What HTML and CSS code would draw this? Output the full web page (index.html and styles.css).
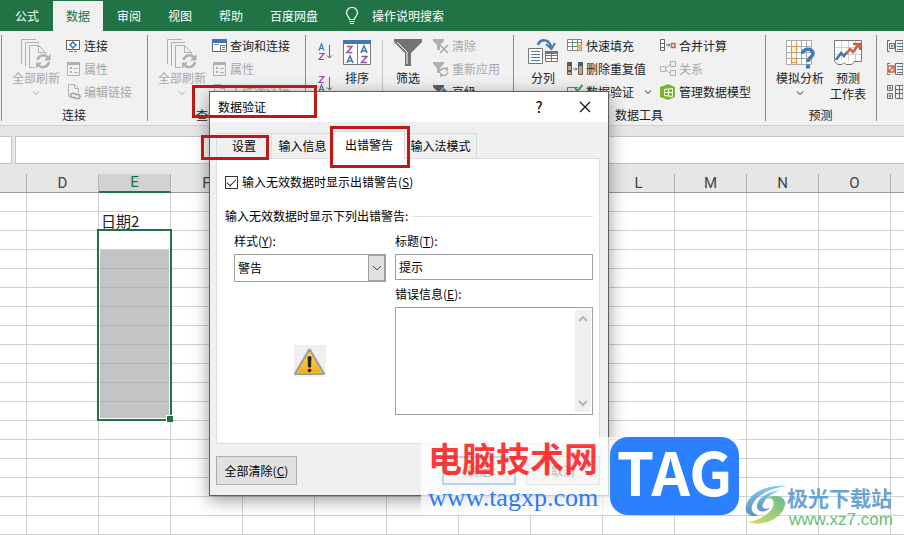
FILE: index.html
```html
<!DOCTYPE html>
<html lang="zh-CN">
<head>
    <meta charset="UTF-8">
    <meta name="viewport" content="width=device-width, initial-scale=1.0">
    <title>数据验证</title>
    <link rel="stylesheet" href="styles.css">
</head>
<body>
    <!-- shared icons -->
    <svg class="defs" aria-hidden="true">
        <symbol id="i-refresh" viewBox="0 0 32 32">
            <g fill="none" stroke="#b0b0b0">
                <path d="M1.500 26V1.500H16M5.500 28V4.500H19"/>
                <path d="M15 29.500H9.500V7.500H18.500L25.500 14.500V16M18.500 7.500V14.500H25.500"/>
                <path d="M17.500 22A6 6 0 0 1 28 19.500M29 24A6 6 0 0 1 18.500 27" stroke-width="2.500"/>
            </g>
            <path d="M30.500 16V22.500H24zM16 30.500V24.500H22z" fill="#b0b0b0"/>
        </symbol>
        <symbol id="i-props" viewBox="0 0 16 16">
            <path d="M2.500 1.500H14.500V14.500H2.500z" fill="none" stroke="#b0b0b0"/>
            <path d="M2 1H15V4H2zM5 6h2v2H5zM5 10h2v2H5zM9 7h4v1H9zM9 11h4v1H9z" fill="#b0b0b0"/>
        </symbol>
        <symbol id="i-link" viewBox="0 0 16 16">
            <path d="M5 12.500H3.500V.5H9.500L13.500 4.500V9M9.500 .5V4.500H13.500" fill="none" stroke="#b0b0b0"/>
            <path d="M9 13.500H7.500A2 2 0 0 1 7.500 9.500H9.500A2 2 0 0 1 11.500 11.500M10.500 10.500H13A2 2 0 0 1 13 14.500H11A2 2 0 0 1 9 12.500" fill="none" stroke="#a2a2a2" stroke-width="1.500"/>
        </symbol>
        <symbol id="i-chevron" viewBox="0 0 8 6">
            <path d="M1 1.500L4 4.500L7 1.500" fill="none" stroke="currentColor"/>
        </symbol>
        <symbol id="i-outline" viewBox="0 0 16 16">
            <path d="M3 2.500H.5V13.500H3M4 5.500H7.500V10.500H2.500V5.500H4M8.500 2.500H16V13.500H8.500z" fill="none" stroke="#6b6b6b"/>
            <path d="M3.500 8H6.500M5 6.500V9.500M10 5.500H16M10 8.500H16M10 11.500H16" stroke="#4a7fb5"/>
        </symbol>
    </svg>

    <nav class="tabbar">
        <a href="#">公式</a>
        <a href="#" class="current">数据</a>
        <a href="#">审阅</a>
        <a href="#">视图</a>
        <a href="#">帮助</a>
        <a href="#">百度网盘</a>
        <a href="#" class="tellme">
            <svg width="14" height="18" viewBox="0 0 14 18"><path d="M4.500 12.500C4.500 9.500 1.500 9 1.500 5.800A5.500 5.300 0 0 1 12.500 5.800C12.500 9 9.500 9.500 9.500 12.500zM4.500 14.500H9.500M5 16.500H9" fill="none" stroke="#fff" stroke-width="1.200"/></svg>
            操作说明搜索
        </a>
    </nav>

    <div class="ribbon">
        <section class="group connections">
            <div class="tools">
                <button class="big off"><svg width="32" height="32"><use href="#i-refresh"/></svg>全部刷新<svg class="chevron"><use href="#i-chevron"/></svg></button>
                <div class="stack">
                    <button class="small"><svg viewBox="0 0 16 16"><path d="M1.500 2.500H14.500V11.500H1.500z" fill="#fff" stroke="#606060"/><path d="M8 4L11 7L8 10L5 7z" fill="none" stroke="#2f78b0" stroke-width="1.500"/><path d="M4 13.500H8M9 13.500H12" stroke="#4e9a68"/></svg>连接</button>
                    <button class="small off"><svg><use href="#i-props"/></svg>属性</button>
                    <button class="small off"><svg><use href="#i-link"/></svg>编辑链接</button>
                </div>
            </div>
            <h2>连接</h2>
        </section>

        <section class="group queries">
            <div class="tools">
                <button class="big off"><svg width="32" height="32"><use href="#i-refresh"/></svg>全部刷新<svg class="chevron"><use href="#i-chevron"/></svg></button>
                <div class="stack">
                    <button class="small"><svg viewBox="0 0 16 16"><path d="M1.500 1.500H15.500V13.500H1.500z" fill="#fff" stroke="#606060"/><path d="M1 1H16V5H1z" fill="#3f79b0"/><path d="M9.500 7.500H15.500M9.500 7V13.500M11 9.500H14M11 11.500H14" stroke="#777"/><path d="M3 6.500H8" stroke="#5b9bd5"/></svg>查询和连接</button>
                    <button class="small off"><svg><use href="#i-props"/></svg>属性</button>
                    <button class="small off"><svg><use href="#i-link"/></svg>工作簿链接</button>
                </div>
            </div>
            <h2>查询和连接</h2>
        </section>

        <section class="group sorting">
            <div class="tools">
                <div class="sorters">
                    <button aria-label="升序"><svg width="16" height="18" viewBox="0 0 16 18" fill="none"><path d="M2 7.500L4.500 1L7 7.500M3 5.500H6" stroke="#3f79b0" stroke-width="1.200"/><path d="M2 10.500H7L2 16.500H7" stroke="#8e55a8" stroke-width="1.200"/><path d="M12.500 2V15M10 12.500L12.500 15L15 12.500" stroke="#666"/></svg></button>
                    <button aria-label="降序"><svg width="16" height="18" viewBox="0 0 16 18" fill="none"><path d="M2 1.500H7L2 7.500H7" stroke="#8e55a8" stroke-width="1.200"/><path d="M2 16.500L4.500 10L7 16.500M3 14.500H6" stroke="#3f79b0" stroke-width="1.200"/><path d="M12.500 2V15M10 12.500L12.500 15L15 12.500" stroke="#666"/></svg></button>
                </div>
                <button class="big"><svg width="30" height="32" viewBox="0 0 30 32" fill="none"><path d="M1.500 3.500H28.500V26.500H1.500zM15.500 3V26" fill="#fff" stroke="#777"/><path d="M1 2H29V6H1z" fill="#3f79b0"/><path d="M5 8.500H10L5 14.500H10.500M19.500 18.500H25L19.500 24.500H25" stroke="#8e55a8" stroke-width="1.500"/><path d="M5 25L8 18L11 25M6 23H10M19 15L22 8L25 15M20 13H24" stroke="#3f79b0" stroke-width="1.500"/></svg>排序</button>
                <span class="divider"></span>
                <button class="big"><svg width="30" height="32" viewBox="0 0 30 32"><path d="M1 1H29V4L18 15V28H12V15L1 4z" fill="#737373"/><path d="M4 4L14 14V26" fill="none" stroke="#fff"/></svg>筛选</button>
                <div class="stack">
                    <button class="small off"><svg viewBox="0 0 16 16"><path d="M0 1H11V3L7 7V12H4V7L0 3z" fill="#b0b0b0"/><path d="M7 7L15 15M15 7L7 15" stroke="#a6a6a6" stroke-width="1.500"/></svg>清除</button>
                    <button class="small off"><svg viewBox="0 0 16 16"><path d="M0 1H11V3L7 7V12H4V7L0 3z" fill="#b0b0b0"/><path d="M7 10A4 4 0 0 1 14 9V6M15 11A4 4 0 0 1 8 13V16" fill="none" stroke="#a6a6a6" stroke-width="1.500"/></svg>重新应用</button>
                    <button class="small"><svg viewBox="0 0 16 16"><path d="M0 1H11V3L7 7V12H4V7L0 3z" fill="#606060"/><path d="M11 4L15 8L11 12L7 8z" fill="#3f79b0"/></svg>高级</button>
                </div>
            </div>
        </section>

        <section class="group datatools">
            <div class="tools">
                <button class="big"><svg width="32" height="32" viewBox="0 0 32 32" fill="none"><path d="M1.500 10.500H15.500V25.500H1.500z" fill="#fff" stroke="#777"/><path d="M4 13.500H13M4 16.500H13M4 19.500H13M4 22.500H13" stroke="#3f79b0"/><path d="M18.500 13.500H30.500V23.500H18.500zM24.500 13V23M18 17.500H30M18 20.500H30" fill="#fff" stroke="#777"/><path d="M18 13H31V16H18z" fill="#777"/><path d="M11 7C13 1 22 0 24 9" stroke="#3f79b0" stroke-width="2.500"/><path d="M19 6L24.500 11L28 5" stroke="#3f79b0" stroke-width="2"/></svg>分列</button>
                <div class="stack">
                    <button class="small"><svg viewBox="0 0 16 16"><path d="M.5 1.500H14.500V12.500H.5zM5.500 1V12M10.500 1V12M0 4.500H15M0 8.500H15" fill="#fff" stroke="#858585"/><path d="M5.500 4.500H10.500V8.500H5.500z" fill="none" stroke="#4e9a68"/><path d="M12 6H16L14 9H16L10 15L12 10H10z" fill="#f2b25c"/></svg>快速填充</button>
                    <button class="small"><svg viewBox="0 0 16 16"><path d="M.5 1.500H4.500V13.500H.5zM11.500 1.500H15.500V13.500H11.500z" fill="#d8a070" stroke="#606060"/><path d="M0 1H5V5H0zM11 1H16V5H11zM0 9H5V11H0z" fill="#3f617f"/><path d="M6 8H10M8.500 6.500L10 8L8.500 9.500" fill="none" stroke="#3f79b0"/></svg>删除重复值</button>
                    <button class="small"><svg viewBox="0 0 16 16"><path d="M11 3.500H.5V8.500H9M.5 10.500H10V14.500H.5z" fill="none" stroke="#777"/><path d="M8 4L10.500 7L15.500 1" fill="none" stroke="#4e9a78" stroke-width="2"/></svg>数据验证<svg class="chevron"><use href="#i-chevron"/></svg></button>
                </div>
                <div class="stack">
                    <button class="small"><svg viewBox="0 0 16 16"><path d="M.5 1.500H4.500V12.500H.5zM0 5.500H5M0 9.500H5" fill="#fff" stroke="#666"/><path d="M6 7H10M8.500 5.500L10 7L8.500 8.500" fill="none" stroke="#666"/><path d="M11.500 5.500H15V9.500H11.500z" fill="none" stroke="#d2603c" stroke-width="1.500"/></svg>合并计算</button>
                    <button class="small off"><svg viewBox="0 0 16 16"><path d="M.5 5.500H5.500V10.500H.5zM10.500 .5H15.500V5.500H10.500zM10.500 9.500H15.500V14.500H10.500zM5.500 7L10 3.500M5.500 9L10 12" fill="none" stroke="#b0b0b0"/></svg>关系</button>
                    <button class="small"><svg viewBox="0 0 16 16"><path d="M0 3L8 0L15 3V13L8 16L0 13z" fill="#78b82a"/><path d="M4.500 5.500L12.500 4.500V12.500L4.500 11.500zM8.500 5V12M4.500 8.500H12.500" fill="none" stroke="#fff"/></svg>管理数据模型</button>
                </div>
            </div>
            <h2>数据工具</h2>
        </section>

        <section class="group forecast">
            <div class="tools">
                <button class="big"><svg width="32" height="32" viewBox="0 0 32 32" fill="none"><path d="M2.500 2.500H27.500V26.500H2.500zM7.500 2V26M12.500 2V26M17.500 2V26M22.500 2V26M2 8.500H27M2 14.500H27M2 20.500H27" fill="#fff" stroke="#aaa"/><path d="M7.500 8.500H12.500V14.500H7.500zM7.500 20.500H12.500V24.500H7.500zM12.500 4.500V8.500" stroke="#dfa24f" stroke-width="1.500"/><path d="M18.500 16C18 10 29 9.500 29 15.500C29 20 24 19 24 24" stroke="#3d7bbd" stroke-width="3.500"/><path d="M22 26.500H26V30.500H22z" fill="#3d7bbd"/></svg>模拟分析<svg class="chevron"><use href="#i-chevron"/></svg></button>
                <button class="big"><svg width="30" height="32" viewBox="0 0 30 32" fill="none"><path d="M1.500 2.500H28.500V23.500H21L19 26.500H13L11 24.500L9 26.500H5L1.500 23.500z" fill="#fff" stroke="#777"/><path d="M2 9.500H28M2 16.500H28M8.500 3V23M15.500 3V23M22.500 3V23" stroke="#d0d0d0"/><path d="M3 22L8 15L11 18L14 14" stroke="#3f79b0" stroke-width="2.500"/><path d="M13 16L17 11L20 14L26 6M20 6H27V12" stroke="#c9603f" stroke-width="2.500"/></svg>预测<br>工作表</button>
            </div>
            <h2>预测</h2>
        </section>

        <section class="group outline">
            <div class="stack">
                <button class="small" aria-label="组合"><svg><use href="#i-outline"/></svg></button>
                <button class="small" aria-label="取消组合"><svg viewBox="0 0 16 16"><path d="M3 2.500H.5V4M.5 12V13.500H3M8.500 2.500H16V13.500H8.500z" fill="none" stroke="#6b6b6b"/><path d="M10 5.500H16M10 8.500H16M10 11.500H16" stroke="#4a7fb5"/><path d="M1 5H7V11H1zM1 11L7 5" fill="none" stroke="#d2603c" stroke-width="1.500"/></svg></button>
                <button class="small" aria-label="分类汇总"><svg viewBox="0 0 16 16"><path d="M.5 1.500H5.500V6.500H.5zM.5 9.500H5.500V14.500H.5zM8.500 1.500H16V14.500H8.500zM12.500 1V15M8 5.500H16M8 9.500H16M1.500 4H4.500M3 2.500V5.500M1.500 12H4.500M3 10.500V13.500" fill="none" stroke="#6b6b6b"/></svg></button>
            </div>
        </section>
    </div>

    <div class="formula-bar">
        <input class="name-box" aria-label="名称框">
        <input class="formula" aria-label="编辑栏">
    </div>

    <div class="sheet">
        <table>
            <colgroup><col class="edge"><col span="13"></colgroup>
            <thead>
                <tr><th></th><th>D</th><th class="active">E</th><th>F</th><th>G</th><th>H</th><th>I</th><th>J</th><th>K</th><th>L</th><th>M</th><th>N</th><th>O</th><th></th></tr>
            </thead>
            <tbody>
                <tr><td></td><td></td><td></td><td></td><td></td><td></td><td></td><td></td><td></td><td></td><td></td><td></td><td></td><td></td></tr>
                <tr><td></td><td></td><td>日期2</td><td></td><td></td><td></td><td></td><td></td><td></td><td></td><td></td><td></td><td></td><td></td></tr>
                <tr><td></td><td></td><td class="anchor"><div class="selection"></div></td><td></td><td></td><td></td><td></td><td></td><td></td><td></td><td></td><td></td><td></td><td></td></tr>
                <tr><td></td><td></td><td class="picked"></td><td></td><td></td><td></td><td></td><td></td><td></td><td></td><td></td><td></td><td></td><td></td></tr>
                <tr><td></td><td></td><td class="picked"></td><td></td><td></td><td></td><td></td><td></td><td></td><td></td><td></td><td></td><td></td><td></td></tr>
                <tr><td></td><td></td><td class="picked"></td><td></td><td></td><td></td><td></td><td></td><td></td><td></td><td></td><td></td><td></td><td></td></tr>
                <tr><td></td><td></td><td class="picked"></td><td></td><td></td><td></td><td></td><td></td><td></td><td></td><td></td><td></td><td></td><td></td></tr>
                <tr><td></td><td></td><td class="picked"></td><td></td><td></td><td></td><td></td><td></td><td></td><td></td><td></td><td></td><td></td><td></td></tr>
                <tr><td></td><td></td><td class="picked"></td><td></td><td></td><td></td><td></td><td></td><td></td><td></td><td></td><td></td><td></td><td></td></tr>
                <tr><td></td><td></td><td class="picked"></td><td></td><td></td><td></td><td></td><td></td><td></td><td></td><td></td><td></td><td></td><td></td></tr>
                <tr><td></td><td></td><td class="picked"></td><td></td><td></td><td></td><td></td><td></td><td></td><td></td><td></td><td></td><td></td><td></td></tr>
                <tr><td></td><td></td><td class="picked"></td><td></td><td></td><td></td><td></td><td></td><td></td><td></td><td></td><td></td><td></td><td></td></tr>
                <tr><td></td><td></td><td></td><td></td><td></td><td></td><td></td><td></td><td></td><td></td><td></td><td></td><td></td><td></td></tr>
                <tr><td></td><td></td><td></td><td></td><td></td><td></td><td></td><td></td><td></td><td></td><td></td><td></td><td></td><td></td></tr>
                <tr><td></td><td></td><td></td><td></td><td></td><td></td><td></td><td></td><td></td><td></td><td></td><td></td><td></td><td></td></tr>
                <tr><td></td><td></td><td></td><td></td><td></td><td></td><td></td><td></td><td></td><td></td><td></td><td></td><td></td><td></td></tr>
                <tr><td></td><td></td><td></td><td></td><td></td><td></td><td></td><td></td><td></td><td></td><td></td><td></td><td></td><td></td></tr>
                <tr><td></td><td></td><td></td><td></td><td></td><td></td><td></td><td></td><td></td><td></td><td></td><td></td><td></td><td></td></tr>
            </tbody>
        </table>
    </div>

    <form class="dialog" role="dialog" aria-labelledby="dialog-title">
        <header>
            <span id="dialog-title">数据验证</span>
            <button type="button" class="help">?</button>
            <button type="button" aria-label="关闭"><svg width="12" height="12" viewBox="0 0 12 12"><path d="M1 1L11 11M11 1L1 11" stroke="#111" stroke-width="1.200"/></svg></button>
        </header>
        <div class="dialog-body">
            <div class="tabs" role="tablist">
                <button type="button" role="tab" class="narrow">设置</button>
                <button type="button" role="tab" class="middle">输入信息</button>
                <button type="button" role="tab" class="selected" aria-selected="true">出错警告</button>
                <button type="button" role="tab">输入法模式</button>
            </div>
            <div class="panel">
                <div class="check">
                    <input type="checkbox" id="show-alert" checked>
                    <label for="show-alert">输入无效数据时显示出错警告(<u>S</u>)</label>
                </div>
                <div class="legend">输入无效数据时显示下列出错警告:</div>
                <div class="fields">
                    <div class="column">
                        <label for="style">样式(<u>Y</u>):</label>
                        <div class="dropdown">
                            <select id="style"><option>警告</option></select>
                            <span><svg width="10" height="8" viewBox="0 0 10 8"><path d="M1 2L5 6L9 2" fill="none" stroke="#444"/></svg></span>
                        </div>
                        <svg class="warning" viewBox="0 0 32 32">
                            <defs><linearGradient id="amber" x2="0" y2="1"><stop offset="0" stop-color="#f6e94a"/><stop offset="1" stop-color="#f2a81d"/></linearGradient></defs>
                            <path d="M15.500 5L29.500 28.500H1.500z" fill="#d9d9d9" stroke="#a0a0a0" stroke-width="3" stroke-linejoin="round"/>
                            <path d="M15.500 7L27.500 27.500H3.500z" fill="url(#amber)" stroke="#f0c52c"/>
                            <path d="M14 12Q15.500 11 17 12L16.500 22H14.500z" fill="#222" stroke="#222"/>
                            <circle cx="15.500" cy="25.500" r="1.800" fill="#222"/>
                        </svg>
                    </div>
                    <div class="column">
                        <label for="alert-title">标题(<u>T</u>):</label>
                        <input type="text" id="alert-title" value="提示">
                        <label for="message">错误信息(<u>E</u>):</label>
                        <div class="memo">
                            <textarea id="message"></textarea>
                            <div class="scrollbar">
                                <svg width="10" height="8" viewBox="0 0 10 8"><path d="M1 6L5 2L9 6" fill="none" stroke="#b5b5b5" stroke-width="2"/></svg>
                                <svg width="10" height="8" viewBox="0 0 10 8"><path d="M1 2L5 6L9 2" fill="none" stroke="#b5b5b5" stroke-width="2"/></svg>
                            </div>
                        </div>
                    </div>
                </div>
            </div>
            <footer>
                <button type="button" class="clear">全部清除(<u>C</u>)</button>
                <button type="button" class="ok">确定</button>
                <button type="button">取消</button>
            </footer>
        </div>
    </form>

    <!-- red call-outs -->
    <div class="mark mark-title"></div>
    <div class="mark mark-settings"></div>
    <div class="mark mark-alert"></div>

    <div class="tagxp">
        <div class="tagxp-text">
            <strong>电脑技术网</strong>
            <span>www.tagxp.com</span>
        </div>
        <div class="tag">TAG</div>
    </div>

    <div class="xz7">
        <svg width="42" height="40" viewBox="0 0 42 40">
            <defs>
                <linearGradient id="sky" x2="0" y2="1"><stop offset="0" stop-color="#70c6e8"/><stop offset="1" stop-color="#4e86c0"/></linearGradient>
                <linearGradient id="leaf" x1="1" x2="0" y2="1"><stop offset="0" stop-color="#52b788"/><stop offset="1" stop-color="#d3dc55"/></linearGradient>
            </defs>
            <path d="M42 1C22-1 4 8 1 21C-1 29 7 33 14 30C6 29 5 23 9 17C15 8 27 3 42 1z" fill="url(#sky)"/>
            <path d="M35 5C22 7 12 14 12 21C12 28 21 28 25 23C20 25 16 23 18 19C21 12 28 8 35 5z" fill="url(#sky)"/>
            <path d="M20 14C31 10 31 22 23 28C17 33 10 36 3 37C19 43 38 32 40 20C42 11 29 8 20 14z" fill="url(#leaf)"/>
        </svg>
        <div>
            <strong>极光下载站</strong>
            <span>www.xz7.com</span>
        </div>
    </div>
</body>
</html>
```
FILE: styles.css
```css
* {
    box-sizing: border-box;
    margin: 0;
    padding: 0;
}

body {
    position: relative;
    min-height: 100vh;
    overflow: hidden;
    background: #fff;
    color: #222;
    font: 12px/16px "Noto Sans CJK SC", sans-serif;
}

button,
input,
select,
textarea {
    font: inherit;
    color: inherit;
    border: 0;
    border-radius: 0;
    background: none;
    appearance: none;
}

button {
    white-space: nowrap;
}

svg {
    flex: none;
}

.defs {
    position: absolute;
    width: 0;
    height: 0;
}

/* tab bar */
.tabbar {
    display: flex;
    gap: 1px;
    height: 31px;
    padding-top: 1px;
    padding-left: 2px;
    background: #217346;
}

.tabbar a {
    display: flex;
    align-items: center;
    padding: 0 13px;
    color: #fff;
    text-decoration: none;
}

.tabbar .current {
    background: #f1f1f1;
    color: #217346;
}

.tabbar .tellme {
    gap: 13px;
}

/* ribbon */
.ribbon {
    display: flex;
    height: 95px;
    padding: 0 0 0 1px;
    background: #f1f1f1;
    border-bottom: 1px solid #d2d2d2;
}

.group {
    position: relative;
    flex: none;
    padding: 3px 0 0 6px;
}

.group::before {
    content: "";
    position: absolute;
    left: 0;
    top: 4px;
    bottom: 4px;
    border-left: 1px solid #8c8c8c;
}

.group h2 {
    padding-right: 6px;
    font-size: 12px;
    font-weight: normal;
    line-height: 24px;
    text-align: center;
}

.connections { width: 146px; }
.queries { width: 158px; }
.sorting { width: 208px; }
.datatools { width: 252px; }
.forecast { width: 111px; }

.outline {
    flex: 1;
    padding-left: 11px;
}

.tools {
    display: flex;
    height: 69px;
}

.big {
    display: flex;
    flex-direction: column;
    align-items: center;
    width: 58px;
    padding-top: 4px;
}

.sorting .big:first-of-type { width: 36px; }
.sorting .divider + .big { width: 50px; }
.datatools .big { width: 48px; }
.forecast .big + .big { width: 38px; }

.big .chevron {
    margin-top: 4px;
}

.chevron {
    width: 8px;
    height: 6px;
}

.small {
    display: flex;
    align-items: center;
    gap: 3px;
    width: 100%;
    height: 23px;
}

.small svg:first-child {
    width: 16px;
    height: 16px;
}

.small .chevron {
    margin-left: 7px;
}

.datatools .stack {
    width: 93px;
}

.off {
    color: #a8a8a8;
}

.sorters {
    display: flex;
    flex-direction: column;
    gap: 14px;
    width: 28px;
    padding-top: 9px;
}

.sorters button {
    height: 18px;
}

.divider {
    margin: 6px 0 0 7px;
    border-left: 1px solid #c8c8c8;
}

/* formula bar */
.formula-bar {
    display: flex;
    gap: 3px;
    height: 48px;
    padding: 10px 0;
    background: #e6e6e6;
}

.formula-bar input {
    background: #fff;
    border: 1px solid #c6c6c6;
}

.name-box {
    width: 12px;
    border-left: 0 !important;
}

.formula {
    flex: 1;
    border-right: 0 !important;
}

/* sheet */
.sheet {
    overflow: hidden;
}

table {
    width: 963px;
    table-layout: fixed;
    border-spacing: 0;
}

col { width: 72px; }
.edge { width: 27px; }

th,
td {
    height: 19px;
    border-right: 1px solid #d0d0d0;
    border-bottom: 1px solid #d0d0d0;
    line-height: 18px;
    white-space: nowrap;
}

th {
    background: #e6e6e6;
    border-right-color: #b5b5b5;
    border-bottom-color: #9b9b9b;
    color: #444;
    font-family: Roboto, sans-serif;
    font-size: 15px;
    font-weight: normal;
    vertical-align: bottom;
}

th.active {
    background: #d2d2d2;
    border-bottom: 2px solid #217346;
    color: #217346;
    line-height: 17px;
}

td {
    padding-left: 2px;
    font-size: 15px;
}

.picked {
    background: #c4c4c4;
    border-bottom-color: #b3b3b3;
}

.anchor {
    position: relative;
}

.selection {
    position: absolute;
    top: -2px;
    left: -2px;
    width: 75px;
    height: 192px;
    border: 2px solid #217346;
    box-shadow: inset 0 0 0 1px #fff;
}

.selection::after {
    content: "";
    position: absolute;
    right: -3px;
    bottom: -3px;
    width: 6px;
    height: 6px;
    background: #217346;
    border: solid #fff;
    border-width: 1px 0 0 1px;
}

/* dialog */
.dialog {
    position: absolute;
    top: 91px;
    left: 209px;
    width: 400px;
    background: #f0f0f0;
    border: 1px solid #5e5e5e;
    box-shadow: 0 4px 16px rgba(0, 0, 0, .4);
    color: #000;
}

.dialog header {
    display: flex;
    align-items: center;
    height: 30px;
    padding-left: 8px;
    background: #fff;
}

.dialog header span {
    flex: 1;
}

.dialog header button {
    display: flex;
    align-items: center;
    justify-content: center;
    width: 46px;
    height: 30px;
}

.help {
    font-size: 15px !important;
}

.dialog-body {
    padding: 9px 8px 10px 6px;
}

.tabs {
    display: flex;
    align-items: flex-end;
}

.tabs button {
    width: 72px;
    height: 25px;
    border: 1px solid #dcdcdc;
    border-bottom: 0;
    border-left: 0;
}

.tabs .narrow { width: 56px; border-left: 1px solid #dcdcdc; }
.tabs .middle { width: 62px; }

.tabs .selected {
    width: 71px;
    height: 28px;
    margin-bottom: -1px;
    padding-bottom: 1px;
    background: #fff;
    z-index: 1;
}

.panel {
    padding: 15px 6px 28px 8px;
    background: #fff;
    border: 1px solid #dcdcdc;
}

.check {
    display: flex;
    align-items: center;
    gap: 4px;
}

.check input {
    display: grid;
    place-items: center;
    width: 13px;
    height: 13px;
    border: 1px solid #333;
}

.check input:checked::before {
    content: "";
    width: 8px;
    height: 4px;
    margin-top: -2px;
    border: solid #222;
    border-width: 0 0 1px 1px;
    transform: rotate(-45deg);
}

.legend {
    display: flex;
    align-items: center;
    gap: 5px;
    margin: 18px 0 9px;
}

.legend::after {
    content: "";
    flex: 1;
    border-top: 1px solid #dcdcdc;
}

.fields {
    display: grid;
    grid-template-columns: 152px 1fr;
    gap: 9px;
    margin-left: 9px;
}

.column {
    display: flex;
    flex-direction: column;
    gap: 5px;
}

.dropdown {
    display: flex;
    height: 28px;
    border: 1px solid #a0a0a0;
}

.dropdown select {
    flex: 1;
    padding-left: 3px;
}

.dropdown span {
    display: flex;
    align-items: center;
    justify-content: center;
    width: 17px;
    background: #e1e1e1;
    border: 1px solid #a0a0a0;
}

.warning {
    width: 32px;
    height: 32px;
    margin: 58px auto 0;
    background: #f0f0f0;
}

.column input {
    width: 100%;
    height: 26px;
    padding: 0 3px 2px;
    border: 1px solid #a0a0a0;
}

.column input + label {
    margin-top: 1px;
}

.memo {
    display: flex;
    height: 108px;
    padding: 2px 1px;
    border: 1px solid #a0a0a0;
}

.memo textarea {
    flex: 1;
    min-width: 0;
    resize: none;
}

.scrollbar {
    display: flex;
    flex-direction: column;
    align-items: center;
    justify-content: space-between;
    width: 16px;
    padding: 5px 0;
    background: #f0f0f0;
}

.dialog footer {
    display: flex;
    gap: 10px;
    margin-top: 12px;
}

.dialog footer button {
    width: 74px;
    height: 29px;
    background: #e1e1e1;
    border: 1px solid #adadad;
}

.dialog footer .clear {
    width: 81px;
    margin-right: auto;
}

.dialog footer .ok {
    border: 2px solid #0078d7;
}

/* call-outs and watermarks float over the window */
.mark {
    position: absolute;
    border: 3px solid #c01717;
}

.mark-title { top: 85px; left: 192px; width: 125px; height: 33px; }
.mark-settings { top: 135px; left: 201px; width: 68px; height: 25px; }
.mark-alert { top: 126px; left: 330px; width: 80px; height: 42px; }

.tagxp {
    position: absolute;
    top: 437px;
    left: 421px;
    display: flex;
    height: 78px;
    background: rgba(255, 255, 255, .7);
}

.tagxp-text {
    width: 189px;
    padding-left: 7px;
    white-space: nowrap;
}

.tagxp strong,
.xz7 strong {
    display: block;
    font-weight: bold;
}

.tagxp strong {
    color: rgba(255, 20, 20, .85);
    font-size: 34px;
    line-height: 42px;
}

.tagxp span {
    display: block;
    color: #2b7bf5;
    font: 26px/38px "Liberation Serif", serif;
}

.tag {
    width: 129px;
    background: #2b80ff;
    border-radius: 18px;
    color: #fff;
    font-size: 60px;
    font-weight: bold;
    line-height: 66px;
    text-align: center;
}

.xz7 {
    position: absolute;
    top: 485px;
    left: 745px;
    display: flex;
    opacity: .9;
    white-space: nowrap;
}

.xz7 strong {
    color: #5c9bcf;
    font-size: 21px;
    line-height: 24px;
}

.xz7 span {
    display: block;
    padding-left: 2px;
    color: #56b86d;
    font: 17px/21px "Liberation Sans", sans-serif;
}
```
